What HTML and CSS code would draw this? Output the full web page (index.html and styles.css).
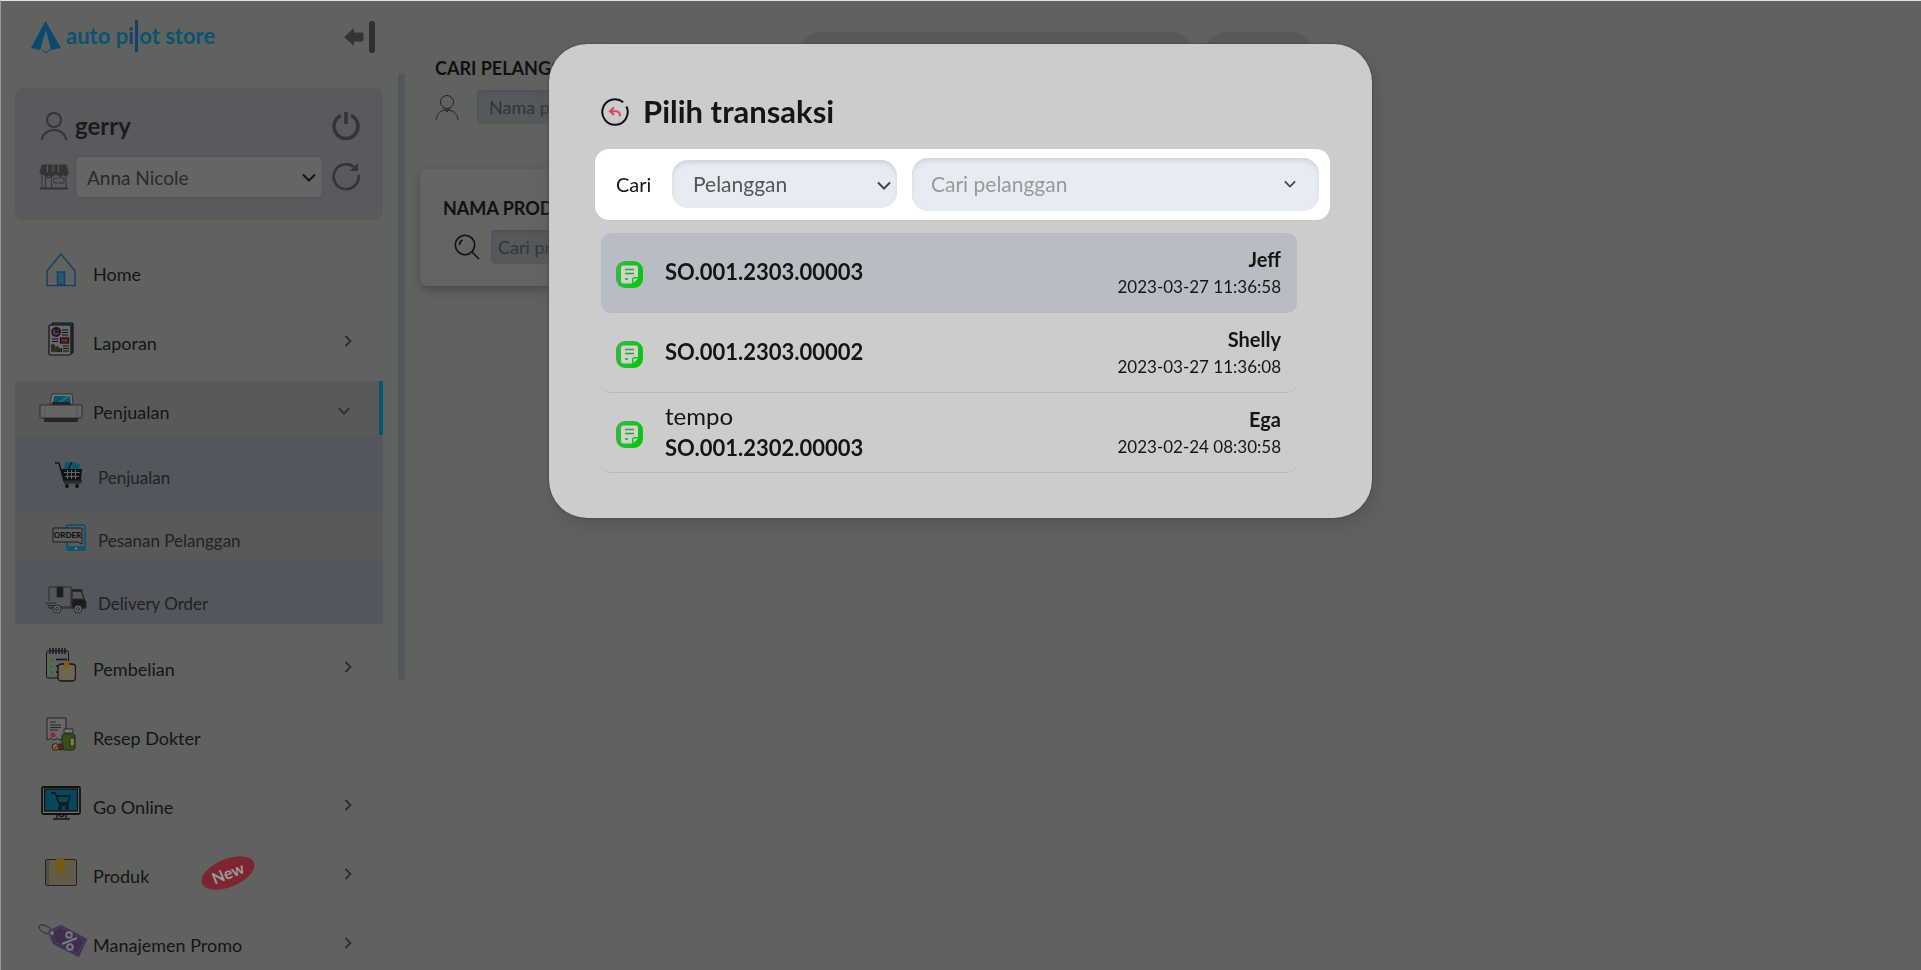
FILE: index.html
```html
<!DOCTYPE html>
<html lang="id">
<head>
<meta charset="utf-8">
<title>Auto Pilot Store</title>
<link rel="stylesheet" href="styles.css">
</head>
<body>
<svg class="defs" aria-hidden="true">
  <linearGradient id="note-green" x1="0" y1="0" x2="1" y2="0.3"><stop offset="0" stop-color="#3fb549"/><stop offset="1" stop-color="#0cc411"/></linearGradient>
  <symbol id="chev-right" viewBox="0 0 8 12"><path d="M1.5 1 6.5 6l-5 5" fill="none" stroke="currentColor" stroke-width="1.8"/></symbol>
  <symbol id="chev-down" viewBox="0 0 14 9"><path d="M1 1.5l6 6 6-6" fill="none" stroke="currentColor" stroke-width="2"/></symbol>
  <symbol id="note" viewBox="0 0 27 27">
    <rect width="27" height="27" rx="9" fill="url(#note-green)"/>
    <path d="M7.500 4.500h12a2.500 2.500 0 0 1 2.500 2.500v9h-3.500a2.500 2.500 0 0 0-2.500 2.500v4H7.500A2.500 2.500 0 0 1 5 20V7a2.500 2.500 0 0 1 2.500-2.500z" fill="#c9d6c9"/>
    <path d="M17.500 22v-3.500a1 1 0 0 1 1-1H22z" fill="#c9d6c9"/>
    <path d="M9 8.500h9M9 12.500h9M9 18h3" stroke="#3a9b42" stroke-width="1.300"/>
  </symbol>
</svg>
<div class="app">
  <aside class="sidebar">
    <header class="brand">
      <svg class="brand-mark" width="32" height="34" viewBox="0 0 32 34"><path d="M15.500 1 31 28l-10 2-5-20-6 20-9-2z" fill="#0b4a6c"/><path d="M12 30l4 3 6-5" fill="none" stroke="#0b4a6c"/></svg>
      <span class="brand-name">auto p<span class="brand-i">i</span><span class="brand-l">l</span>ot store</span>
      <button class="icon-btn collapse" aria-label="Tutup menu"><svg width="33" height="32" viewBox="0 0 33 32"><path d="M1 16 11 7v4.500h8a1.500 1.500 0 0 1 1.500 1.500v6a1.500 1.500 0 0 1-1.500 1.500h-8V25z" fill="#343434"/><rect x="26" width="6" height="32" rx="3" fill="#2f2f2f"/></svg></button>
    </header>
    <section class="account">
      <div class="account-row">
        <svg class="account-icon" width="30" height="28" viewBox="0 0 30 28"><circle cx="15" cy="8" r="7" fill="none" stroke="#343434" stroke-width="2"/><path d="M3 28a12 10 0 0 1 24 0" fill="none" stroke="#343434" stroke-width="2"/></svg>
        <strong class="account-name">gerry</strong>
        <button class="icon-btn" aria-label="Keluar"><svg width="28" height="28" viewBox="0 0 28 28" fill="none" stroke="#343434" stroke-width="3.500"><path d="M9 3.500a12 12 0 1 0 10 0M14 0v12"/></svg></button>
      </div>
      <div class="account-row">
        <svg class="account-icon" width="30" height="26" viewBox="0 0 30 26" fill="none" stroke="#343434"><path d="M3 1h24l2 7a2.500 2.500 0 0 1-5 2 2.500 2.500 0 0 1-5 0 2.500 2.500 0 0 1-4 0 2.500 2.500 0 0 1-5 0 2.500 2.500 0 0 1-5 0 2.500 2.500 0 0 1-4-2z" fill="#343434"/><path d="M8.500 1v7M14 1v7M19.500 1v7" stroke="#5a5b60"/><path d="M3 10v14M27 10v14M6.500 24V13.500h6V24M15 14h10v5H15z"/><path d="M1 24.500h28" stroke-width="2"/></svg>
        <div class="select-wrap store-wrap">
          <select class="store-select" aria-label="Toko"><option>Anna Nicole</option></select>
          <svg class="select-arrow" width="14" height="9"><use href="#chev-down"/></svg>
        </div>
        <button class="icon-btn" aria-label="Muat ulang"><svg width="28" height="28" viewBox="0 0 28 28"><path d="M26.500 12A12.500 12.500 0 1 1 22 4" fill="none" stroke="#343434" stroke-width="2.600"/><path d="M26 0v8h-8z" fill="#343434"/></svg></button>
      </div>
    </section>
    <nav class="menu">
      <a class="item" href="#"><span class="slot"><svg width="30" height="34" viewBox="0 0 30 34" fill="none" stroke="#1d3f63" stroke-width="1.500"><path d="M1 18 15 1l14 17v14.500H1z"/><path d="M3 30.500h24" stroke="#5b6b78"/><rect x="11.500" y="19" width="7" height="12.500" fill="#275a70"/></svg></span><span class="label">Home</span></a>
      <a class="item" href="#"><span class="slot"><svg width="26" height="34" viewBox="0 0 26 34" stroke="#111" stroke-width="1.200"><rect x="4" y="1" width="21" height="30" rx="1" fill="#0f4c5e"/><rect x="1" y="3" width="22" height="30" rx="1.500" fill="#68686a"/><circle cx="8" cy="10" r="4.200" fill="#47345c"/><path d="M8 10V5.800A4.200 4.200 0 0 1 12.200 10z" fill="#7a1f26"/><path d="M14 8h6M14 10.500h6M14 13h6M4 17h6M4 19.500h6M15 24h6M15 26.500h6M15 29h6"/><rect x="12.500" y="16" width="8" height="5" fill="#7a1f26"/><path d="M4 30v-7h2v7M8 30v-5h2v5M11.500 30v-3h2v3" fill="#6b5a1c"/></svg></span><span class="label">Laporan</span><svg class="chev" width="8" height="12"><use href="#chev-right"/></svg></a>
      <a class="item active" href="#"><span class="slot"><svg width="44" height="30" viewBox="0 0 44 30"><path d="M13 1h20l1 10H11z" fill="#777" stroke="#333"/><path d="M15 3h16l1 7H14z" fill="#0a556d"/><path d="M22 10l9-7h-4l-9 7z" fill="#177086"/><rect x="13" y="9" width="18" height="3" fill="#222"/><rect x="1" y="12" width="42" height="13" rx="1" fill="#656565" stroke="#2c2c2c"/><path d="M6 12v13M38 12v13" stroke="#555"/><rect x="5" y="25" width="34" height="4" fill="#252525"/></svg></span><span class="label">Penjualan</span><svg class="chev down" width="12" height="8"><use href="#chev-down"/></svg></a>
      <div class="submenu">
        <a class="sub first" href="#"><span class="sub-slot"><svg width="27" height="27" viewBox="0 0 27 27"><path d="M10 1h6l-1 8H9zM17 1l8 2-1 6h-8z" fill="#0c5770"/><path d="M0 2h4l5 18h18M17 1l-4 8" fill="none" stroke="#131313" stroke-width="1.400"/><path d="M6 8h21l-1 11H9z" fill="#131313"/><path d="M9 11.500h16M10 15.500h14M12.500 9v9M16.500 9v9M20.500 9v9" stroke="#62646b"/><path d="M9 22h17" stroke="#131313"/><circle cx="12" cy="25" r="2" fill="#131313"/><circle cx="22" cy="25" r="2" fill="#131313"/></svg></span><span class="label">Penjualan</span></a>
        <a class="sub current" href="#"><span class="sub-slot end"><svg width="35" height="27" viewBox="0 0 35 27"><rect x="15" y="1" width="18" height="25" rx="1.500" fill="#5a5a5b" stroke="#0c5770" stroke-width="1.800"/><path d="M14 22h20v3a2 2 0 0 1-2 2H16a2 2 0 0 1-2-2z" fill="#0c5770"/><circle cx="24" cy="24.500" r="1.200" fill="#777"/><path d="M1 4h29v16l-4-2H1z" fill="#5e5e5f" stroke="#1d1d1d"/><text class="order-text" x="15.500" y="14">ORDER</text></svg></span><span class="label">Pesanan Pelanggan</span></a>
        <a class="sub last" href="#"><span class="sub-slot end"><svg width="42" height="28" viewBox="0 0 42 28" fill="none" stroke="#2a2a2a"><path d="M4 15V1h22v20H15M4 19v3h4"/><path d="M12 1h6v10h-6z" fill="#1b1b1b"/><path d="M27 4.500h9l3 8v4H27z" stroke-width="1.400"/><path d="M27 3.500h10v2H27z" fill="#222"/><path d="M28 13h11l2 3v6H27v-5z" fill="#1b1b1b"/><path d="M0 17h11M2 19.500h7M5 22h36"/><circle cx="12" cy="23" r="4" fill="#666"/><circle cx="12" cy="23" r="1.500"/><circle cx="33" cy="23" r="4" fill="#666"/><circle cx="33" cy="23" r="1.500"/></svg></span><span class="label">Delivery Order</span></a>
      </div>
      <a class="item" href="#"><span class="slot"><svg width="30" height="34" viewBox="0 0 30 34" stroke="#151515"><rect x=".5" y="3" width="22" height="27" rx="1.500" fill="#5f5f66"/><path d="M4 0v6M7 0v6M10 0v6M13 0v6M16 0v6M19 0v6M10 11.500h11M10 18h6M10 24h5" stroke-width="1.400"/><g fill="#3c6b22" stroke="#547a3a"><circle cx="5.500" cy="11.500" r="2.200"/><circle cx="5.500" cy="18" r="2.200"/><circle cx="5.500" cy="24.500" r="2.200"/></g><rect x="12" y="16" width="17.500" height="17" rx="3.500" fill="#6e664f" stroke-width="1.300"/><path d="M18 13.500h5V20h-5z" fill="#8a5a10" stroke="none"/></svg></span><span class="label">Pembelian</span><svg class="chev" width="8" height="12"><use href="#chev-right"/></svg></a>
      <a class="item" href="#"><span class="slot"><svg width="30" height="34" viewBox="0 0 30 34" stroke="#262626"><path d="M1 1h19v22l-3-1.500-3 1.500-3-1.500-3 1.500-3-1.500L1 23z" fill="#68686a"/><path d="M4 5h6M4 8h11M4 10.500h11M4 13h8" /><circle cx="7" cy="18" r="2.500" fill="#8b2a33" stroke="none"/><path d="M18 12h9v4h-9z" fill="#757577"/><rect x="16" y="17" width="13" height="16" rx="2" fill="#365015"/><rect x="24" y="21" width="4.500" height="8" fill="#8b7b25"/><circle cx="14.500" cy="30" r="3" fill="#641f26"/><circle cx="9.500" cy="30" r="3.500" fill="#77702f"/><path d="M7.500 32.500l5-4.500"/></svg></span><span class="label">Resep Dokter</span></a>
      <a class="item" href="#"><span class="slot"><svg width="40" height="34" viewBox="0 0 40 34" fill="none" stroke="#121212" stroke-width="1.300"><rect x="1" y="1" width="38" height="27" rx="1.500" fill="#6f6f6f" stroke-width="1.800"/><rect x="3.500" y="3" width="33" height="22" fill="#07485e"/><path d="M10 7h4l5 12h9M15 10h14l-2 7h-9"/><circle cx="19" cy="22" r="1.300"/><circle cx="26" cy="22" r="1.300"/><path d="M16 28v4M25 28v4M12 33h17M18 28a2.500 2.500 0 0 0 5 0"/></svg></span><span class="label">Go Online</span><svg class="chev" width="8" height="12"><use href="#chev-right"/></svg></a>
      <a class="item" href="#"><span class="slot"><svg width="32" height="28" viewBox="0 0 32 28"><rect x=".5" y="1.500" width="31" height="26" rx="1.500" fill="#625b47" stroke="#222"/><path d="M1 2h3v25H1z" fill="#544f42"/><path d="M11.500 0h8v15h-8z" fill="#79590f"/></svg></span><span class="label">Produk</span><span class="badge-box"><span class="badge">New</span></span><svg class="chev" width="8" height="12"><use href="#chev-right"/></svg></a>
      <a class="item" href="#"><span class="slot wide"><svg width="50" height="34" viewBox="0 0 50 34"><path d="M13 10C9 11 1 7 1 3s8-2 12 2" fill="none" stroke="#262626"/><path d="M10 7 23 1l26 14-8 18-26-13z" fill="#3f2d50" stroke="#544560"/><path d="M13 8 23 3l23 13-6 14-23-12z" fill="none" stroke="#594a68" stroke-dasharray="2 1"/><circle cx="14" cy="9" r="2" fill="#74747a"/><g stroke="#7a7880" fill="none"><circle cx="31" cy="11" r="2.800" stroke-width="2"/><circle cx="32" cy="23" r="2.800" stroke-width="2"/><path d="M24 20l15-6" stroke-width="2"/></g></svg></span><span class="label">Manajemen Promo</span><svg class="chev" width="8" height="12"><use href="#chev-right"/></svg></a>
    </nav>
  </aside>
  <div class="scroll-thumb"></div>
  <main class="main">
    <div class="top">
      <section class="customer">
        <label class="heading" for="customer">CARI PELANGGAN</label>
        <div class="field-row">
          <svg class="customer-icon" width="24" height="26" viewBox="0 0 24 26" fill="none" stroke="#242424"><circle cx="12" cy="8" r="6.500"/><path d="M1 26c1-7 5-10 11-10s10 3 11 10M8 13l4 5 4-5"/></svg>
          <input class="dim-input" id="customer" placeholder="Nama pelanggan">
        </div>
      </section>
      <div class="pill long"></div>
      <div class="pill short"></div>
    </div>
    <section class="card">
      <label class="heading" for="product">NAMA PRODUK</label>
      <div class="field-row product-row">
        <svg width="26" height="26" viewBox="0 0 26 26" fill="none" stroke="#111" stroke-width="1.600"><circle cx="11" cy="11" r="9.700"/><path d="M18 18l7 7M5.500 11a5.500 5.500 0 0 1 3-5"/></svg>
        <input class="dim-input product-input" id="product" placeholder="Cari produk">
      </div>
    </section>
  </main>
</div>
<div class="overlay">
  <div class="modal" role="dialog" aria-labelledby="title">
    <div class="modal-head">
      <button class="icon-btn" aria-label="Kembali"><svg width="28" height="28" viewBox="0 0 28 28" fill="none"><path d="M21.500 3.800A12.700 12.700 0 1 0 25 7.700" stroke="#111" stroke-width="2" transform="rotate(4 14 14)"/><path d="M13 9.500 9 13.200l4 3.800M9.500 13.200h5.500q4 .3 4 5" stroke="#cf4a5c" stroke-width="2"/></svg></button>
      <h1 class="title" id="title">Pilih transaksi</h1>
    </div>
    <form class="search">
      <label class="search-label" for="by">Cari</label>
      <div class="select-wrap by-wrap">
        <select class="by-select" id="by"><option>Pelanggan</option></select>
        <svg class="select-arrow by-arrow" width="14" height="9"><use href="#chev-down"/></svg>
      </div>
      <div class="select-wrap query-wrap">
        <input class="query" aria-label="Cari pelanggan" placeholder="Cari pelanggan">
        <svg class="select-arrow query-arrow" width="12" height="8"><use href="#chev-down"/></svg>
      </div>
    </form>
    <ul class="list">
      <li class="row selected"><svg class="row-icon" width="27" height="27"><use href="#note"/></svg><div class="info"><strong class="number">SO.001.2303.00003</strong></div><div class="meta"><strong class="who">Jeff</strong><time class="when">2023-03-27 11:36:58</time></div></li>
      <li class="row"><svg class="row-icon" width="27" height="27"><use href="#note"/></svg><div class="info"><strong class="number">SO.001.2303.00002</strong></div><div class="meta"><strong class="who">Shelly</strong><time class="when">2023-03-27 11:36:08</time></div></li>
      <li class="row"><svg class="row-icon" width="27" height="27"><use href="#note"/></svg><div class="info"><span class="note-text">tempo</span><strong class="number">SO.001.2302.00003</strong></div><div class="meta"><strong class="who">Ega</strong><time class="when">2023-02-24 08:30:58</time></div></li>
    </ul>
  </div>
</div>
</body>
</html>
```
FILE: styles.css
```css
* { box-sizing: border-box; }
body {
  margin: 0;
  height: 100vh;
  overflow: hidden;
  background: #60625f;
  border-top: 1px solid #e4e4e4;
  border-left: 1px solid #999b98;
  color: #151515;
  font-family: Lato, "Liberation Sans", sans-serif;
  font-size: 18px;
}
button, input, select { font: inherit; color: inherit; }
a { color: inherit; text-decoration: none; }
svg { display: block; flex: none; }
.defs { position: absolute; width: 0; height: 0; }
.icon-btn { display: block; padding: 0; border: 0; background: none; flex: none; }

.app { display: flex; align-items: flex-start; height: 100%; }
.sidebar { width: 382px; flex: none; padding-left: 14px; }

.brand { display: flex; align-items: center; height: 72px; margin-bottom: 15px; padding: 0 7px 0 15px; }
.brand-name { margin-left: 4px; padding-bottom: 2px; font-size: 22px; line-height: 32px; font-weight: 700; color: #0b536e; white-space: nowrap; }
.brand-i { color: #173f6b; }
.brand-l { position: relative; color: #173f6b; }
.brand-l::after { content: ""; position: absolute; left: 1px; top: -2px; width: 3px; height: 32px; background: #173f6b; }
.collapse { margin-left: auto; }

.account { display: flex; flex-direction: column; gap: 9px; padding: 17px 23px 22px 24px; border-radius: 8px; background: #595a5e; }
.account-row { display: flex; align-items: center; height: 42px; }
.account-icon { margin-right: 6px; }
.account-name { flex: 1; font-size: 24px; line-height: 32px; color: #1c1c1c; }
.select-wrap { position: relative; }
.select-arrow { position: absolute; right: 7px; top: 50%; margin-top: -4px; pointer-events: none; }
.store-wrap { flex: 1; margin-right: 9px; }
.store-select { appearance: none; width: 100%; height: 42px; padding: 0 24px 0 11px; border: 1px solid #525357; border-radius: 6px; background: #656565; font-size: 19px; color: #2a2a2a; }

.menu { margin-top: 15px; }
.item { display: flex; align-items: center; height: 69px; padding: 0 31px 0 23px; }
.slot { display: flex; justify-content: center; width: 46px; margin-right: 9px; flex: none; }
.slot.wide { justify-content: flex-start; }
.label { padding-top: 9px; white-space: nowrap; }
.chev { margin-left: auto; margin-top: 5px; color: #2c2c2c; }
.chev.down { margin-right: 2px; }
.item.active { height: 54px; margin-top: 8px; padding-right: 27px; border-right: 4px solid #07566e; background: #595959; }
.item.active .label { padding-top: 7px; }
.submenu { margin-bottom: 6px; font-size: 17px; color: #222; }
.sub { display: flex; align-items: center; padding-left: 30px; background: #53565d; }
.sub.first { height: 78px; }
.sub.current { height: 48px; background: #59595a; }
.sub.last { height: 63px; padding-top: 14px; }
.sub .label { padding-top: 7px; }
.sub-slot { display: flex; justify-content: center; width: 42px; margin-right: 11px; padding-left: 5px; flex: none; }
.sub-slot.end { padding-left: 0; justify-content: flex-end; }
.order-text { font-size: 8px; font-weight: 900; fill: #121212; stroke: none; text-anchor: middle; }
.badge-box { margin-left: 51px; padding-top: 2px; }
.badge { display: block; width: 56px; height: 28px; border-radius: 50%; background: #7d2630; color: #9a9a9a; font-size: 16px; line-height: 28px; font-weight: 700; text-align: center; transform: rotate(-22deg); }

.scroll-thumb { width: 7px; height: 607px; margin: 72px 0 0 15px; border-radius: 4px; background: #53575d; flex: none; }
.main { flex: 1; min-width: 0; padding-left: 15px; }
.top { display: flex; height: 168px; padding: 31px 0 0 15px; }
.customer { width: 364px; padding-top: 24px; }
.heading { display: block; font-size: 18px; line-height: 24px; font-weight: 700; color: #101010; }
.field-row { display: flex; align-items: center; margin-top: 10px; }
.customer-icon { margin-right: 18px; }
.dim-input { width: 240px; height: 34px; padding: 0 12px; border: 0; border-radius: 5px; background: #55585d; box-shadow: inset 0 2px 3px #4c4f54; }
.dim-input::placeholder { color: #333538; opacity: 1; }
.pill { height: 44px; border-radius: 22px; background: #59585c; }
.pill.long { width: 394px; margin-right: 12px; }
.pill.short { width: 108px; }
.card { width: 900px; height: 117px; padding: 27px 23px; border-radius: 7px; background: #646464; box-shadow: 0 4px 8px #4a4b4a; }
.product-row { padding-left: 11px; gap: 11px; }
.product-input { padding: 0 7px; }

.overlay { position: fixed; inset: 0; display: flex; justify-content: center; align-items: flex-start; padding-top: 44px; }
.modal { width: 823px; padding: 48px 42px 45px 46px; border-radius: 38px; background: #ccc; box-shadow: 0 0 2px #333, 4px 8px 18px #55565a; }
.modal-head { display: flex; align-items: center; gap: 14px; height: 40px; padding-left: 6px; }
.title { margin: 0; font-size: 31px; line-height: 38px; padding-bottom: 2px; font-weight: 700; }
.search { display: flex; align-items: center; margin-top: 17px; height: 71px; padding: 0 11px 0 21px; border-radius: 14px; background: #fff; font-size: 21px; }
.search-label { width: 56px; padding-bottom: 2px; font-size: 20px; }
.by-wrap { width: 225px; margin-right: 15px; padding-bottom: 2px; }
.by-select { appearance: none; display: block; width: 100%; height: 48px; padding: 0 30px 0 21px; border: 0; border-radius: 16px; background: #e7ebf4; box-shadow: inset 0 3px 4px #d0d5de; color: #555; }
.by-arrow { right: 6px; color: #444; }
.query-wrap { flex: 1; }
.query { display: block; width: 100%; height: 53px; padding: 0 40px 2px 19px; border: 0; border-radius: 16px; background: #e7ebf4; box-shadow: inset 0 3px 4px #d0d5de; }
.query::placeholder { color: #999; opacity: 1; }
.query-arrow { right: 23px; margin-top: -5px; color: #444; }
.list { margin: 13px 33px 0 6px; padding: 0; list-style: none; }
.row { display: flex; align-items: center; height: 80px; padding: 0 16px 0 15px; border-bottom: 1px solid #b5bac0; border-radius: 10px; }
.row.selected { background: #b8bdc5; }
.row-icon { margin-top: 4px; }
.info { display: flex; flex-direction: column; flex: 1; margin-left: 22px; padding-bottom: 2px; font-size: 22px; line-height: 32px; }
.number { font-weight: 700; }
.note-text { font-size: 24px; }
.meta { text-align: right; line-height: 28px; }
.who { display: block; font-size: 20px; }
.when { display: block; font-size: 17px; }
```
